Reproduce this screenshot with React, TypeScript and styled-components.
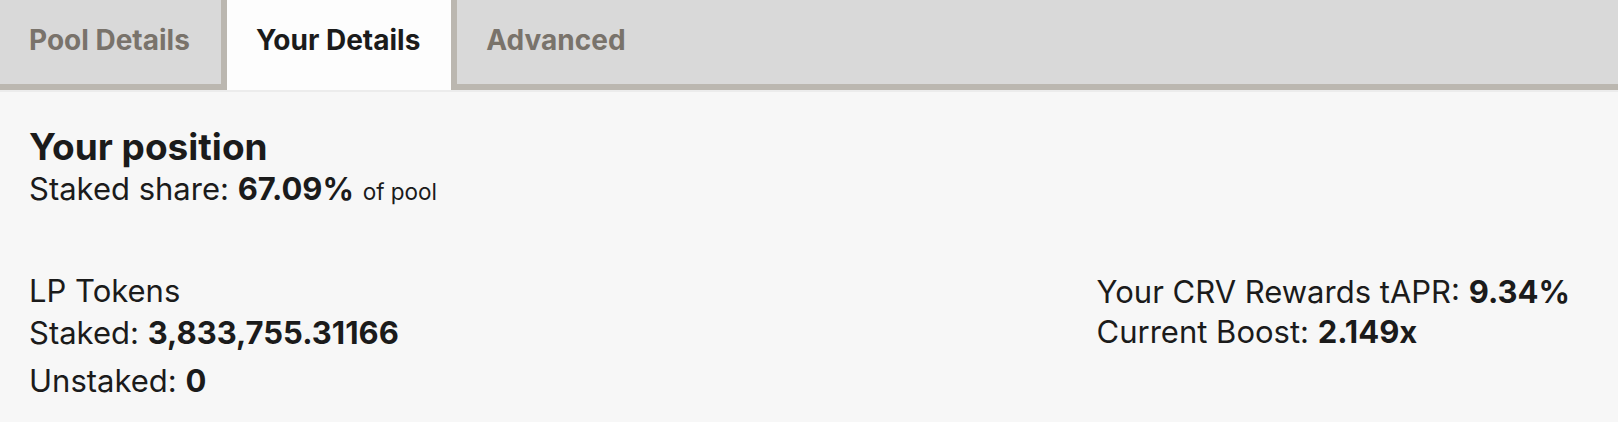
import React from "react";
import styled, { createGlobalStyle } from "styled-components";

const GlobalStyle = createGlobalStyle`
  body {
    margin: 0;
    background-color: #f7f7f7;
    font-family: Inter, "Noto Sans", sans-serif;
    color: #1b1b1b;
  }
`;

const Wrapper = styled.div`
  width: 100%;
  min-height: 422px;
  background-color: #f7f7f7;
`;

const TabBar = styled.nav`
  display: flex;
  height: 90px;
  background-color: #d9d9d9;
  border-bottom: 2px solid #ececec;
`;

const Tab = styled.button<{ $active?: boolean }>`
  display: flex;
  align-items: flex-start;
  height: 90px;
  padding: 23px 31px 0 29px;
  border: none;
  box-sizing: border-box;
  font-family: inherit;
  font-size: 28px;
  line-height: 34px;
  font-weight: 700;
  cursor: pointer;
  background-color: ${(p) => (p.$active ? "#fdfdfd" : "#d9d9d9")};
  color: ${(p) => (p.$active ? "#1b1b1b" : "#79736b")};
  border-bottom: ${(p) => (p.$active ? "none" : "6px solid #bbb7b0")};
  border-left: ${(p) => (p.$active ? "6px solid #bbb7b0" : "none")};
  border-right: ${(p) => (p.$active ? "6px solid #bbb7b0" : "none")};
`;

const TabFiller = styled.div`
  flex: 1;
  border-bottom: 6px solid #bbb7b0;
`;

const Content = styled.section`
  padding: 33px 48px 0 29px;
`;

const Heading = styled.h2`
  margin: 0;
  font-size: 37px;
  line-height: 44px;
  font-weight: 700;
`;

const Line = styled.div<{ $height?: number; $gap?: number }>`
  font-size: 31px;
  line-height: ${(p) => p.$height ?? 40}px;
  margin-top: ${(p) => p.$gap ?? 0}px;
  white-space: nowrap;
`;

const Value = styled.strong`
  font-weight: 700;
`;

const Small = styled.span`
  font-size: 22.5px;
`;

const Stats = styled.div`
  display: flex;
  justify-content: space-between;
  align-items: flex-start;
  margin-top: 58px;
`;

const Column = styled.div<{ $offset?: number }>`
  display: flex;
  flex-direction: column;
  padding-top: ${(p) => p.$offset ?? 0}px;
`;

function App() {
  return (
    <Wrapper>
      <GlobalStyle />
      <TabBar>
        <Tab>Pool Details</Tab>
        <Tab $active>Your Details</Tab>
        <Tab>Advanced</Tab>
        <TabFiller />
      </TabBar>
      <Content>
        <Heading>Your position</Heading>
        <Line>
          Staked share: <Value>67.09%</Value> <Small>of pool</Small>
        </Line>
        <Stats>
          <Column>
            <Line $height={42}>LP Tokens</Line>
            <Line $height={42}>
              Staked: <Value>3,833,755.31166</Value>
            </Line>
            <Line $height={42} $gap={6}>
              Unstaked: <Value>0</Value>
            </Line>
          </Column>
          <Column $offset={2}>
            <Line $height={40}>
              Your CRV Rewards tAPR: <Value>9.34%</Value>
            </Line>
            <Line $height={40}>
              Current Boost: <Value>2.149x</Value>
            </Line>
          </Column>
        </Stats>
      </Content>
    </Wrapper>
  );
}

export default App;
